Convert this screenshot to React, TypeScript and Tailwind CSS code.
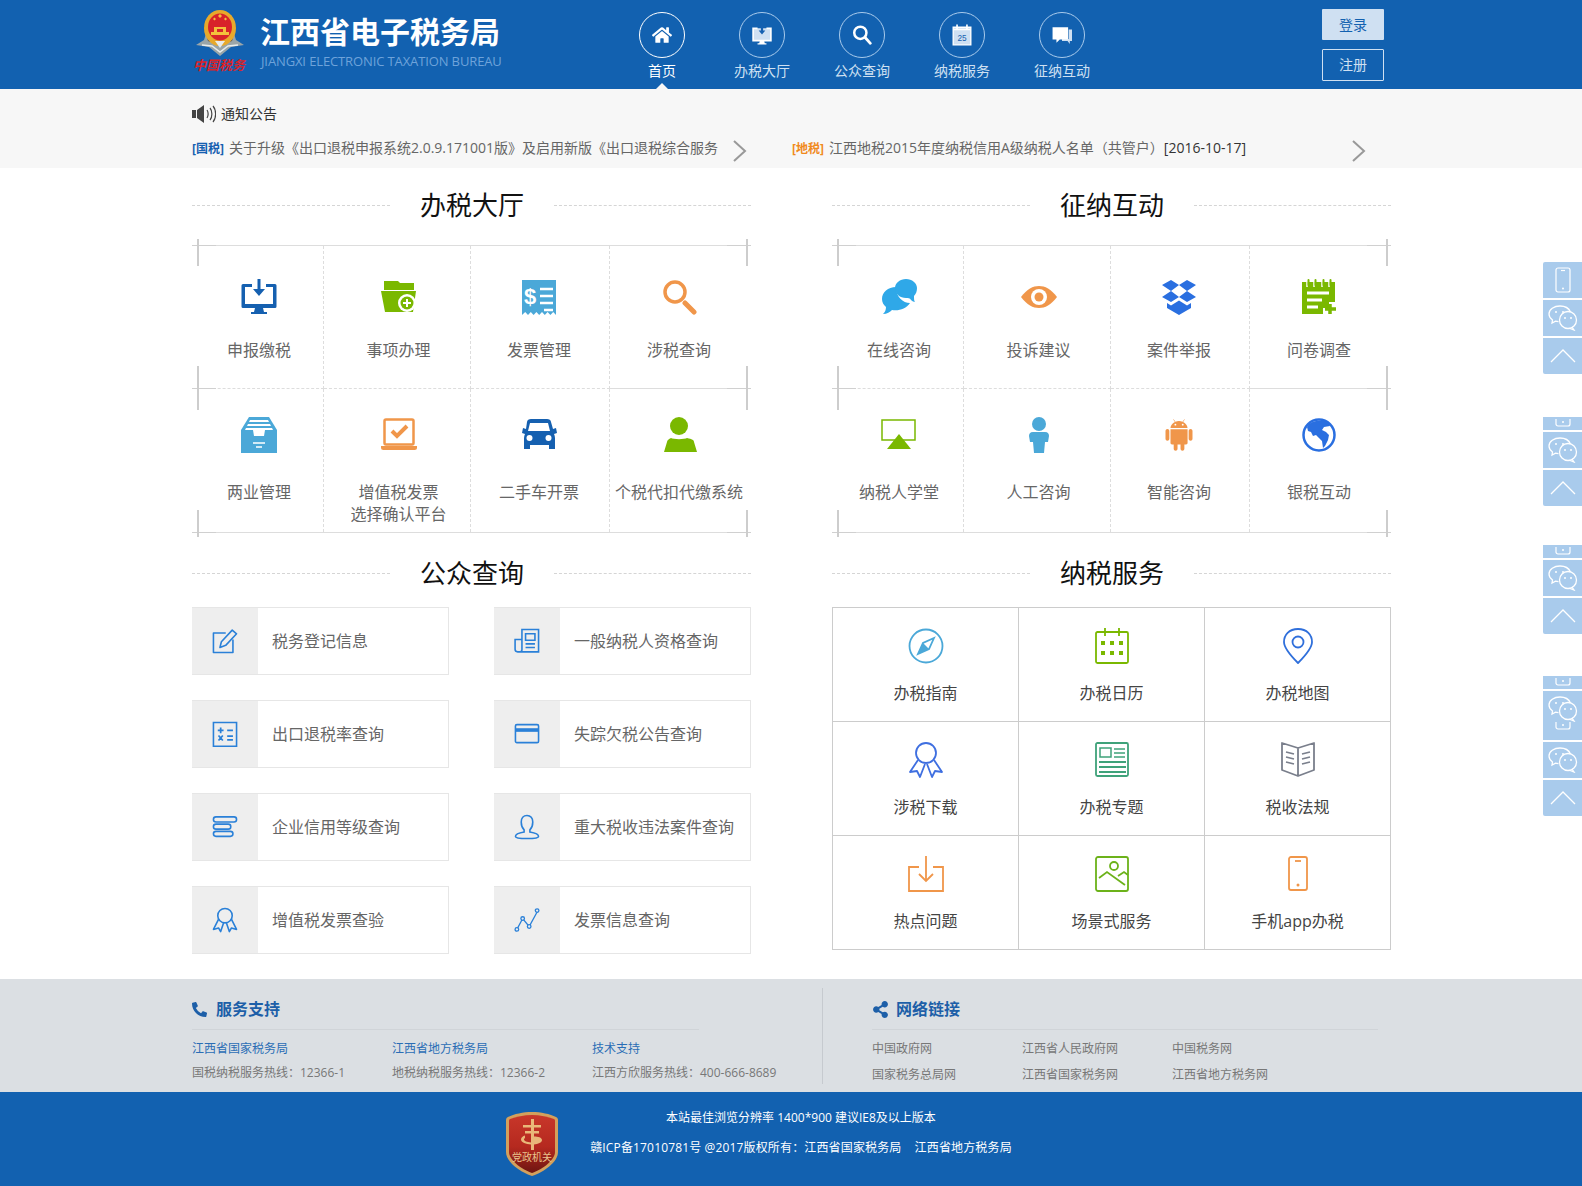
import type { ReactNode } from 'react';
import { AiFillAndroid } from 'react-icons/ai';
import { FaHome, FaPhoneAlt, FaShareAlt } from 'react-icons/fa';

const Ico = ({ children, size = 36 }: { children: ReactNode; size?: number }) => (
  <svg width={size} height={size} viewBox="0 0 36 36" fill="none" className="block shrink-0">
    {children}
  </svg>
);

const BLUE = '#1560b0';
const GREEN = '#7ab800';
const ORANGE = '#f0964a';
const SKY = '#4ba8d8';
const LINE = '#2a80d8';

const hallIcons: Record<string, ReactNode> = {
  monitor: (
    <Ico>
      <path fill={BLUE} d="M2 5h9v3H4v17h28V8h-7V5h9a1.500 1.500 0 0 1 1.500 1.500v21a1.500 1.500 0 0 1-1.500 1.500H2a1.500 1.500 0 0 1-1.500-1.500v-21A1.500 1.500 0 0 1 2 5z" />
      <path fill={BLUE} d="M14 29h8l1 4h3v2H10v-2h3zM16.500 0h3v10h4.500l-6 7-6-7h4.500z" />
    </Ico>
  ),
  folder: (
    <Ico>
      <path fill={GREEN} d="M3 2h14l2 2h14v7H3zM0 12h35l-3 21H4z" />
      <circle cx="26" cy="24" r="9" fill="#fff" />
      <circle cx="26" cy="24" r="6.500" fill={GREEN} />
      <path stroke="#fff" strokeWidth="2" d="M26 20v8M22 24h8" />
    </Ico>
  ),
  invoice: (
    <Ico>
      <path fill={SKY} d="M1 1h34v35l-2.800-3-2.800 3-2.800-3-2.800 3-2.800-3-2.800 3-2.800-3-2.800 3-2.800-3-2.800 3-2.800-3L1 36z" />
      <text x="9" y="25" textAnchor="middle" fill="#fff" fontSize="22" fontWeight="700" fontFamily="Liberation Sans">$</text>
      <path stroke="#fff" strokeWidth="2.500" d="M19 10h13M19 17h13M19 24h13M23 31h9" />
    </Ico>
  ),
  magnifier: (
    <Ico>
      <circle cx="14" cy="13" r="10" stroke={ORANGE} strokeWidth="3.500" />
      <path stroke={ORANGE} strokeWidth="5" strokeLinecap="round" d="M24 24l9 9" />
    </Ico>
  ),
  tray: (
    <Ico>
      <path fill={SKY} d="M8 0h20l8 13v23H0V13z" />
      <path fill="#fff" d="M9 3h18l1 2H8zM7 7h22l1 2H6zM5 11h26l1 2h-8l-1 6H13l-1-6H4z" />
      <path stroke="#fff" strokeWidth="1.500" d="M12 26h12M15 30h6" />
    </Ico>
  ),
  laptop: (
    <Ico>
      <rect x="3.500" y="2.500" width="29" height="25" rx="1.500" stroke={ORANGE} strokeWidth="2.500" />
      <path fill={ORANGE} d="M0 29h36v1.500a2.500 2.500 0 0 1-2.500 2.500h-31A2.500 2.500 0 0 1 0 30.500z" />
      <path stroke={ORANGE} strokeWidth="4" d="M11 14l5 5 10-10" />
    </Ico>
  ),
  car: (
    <Ico>
      <path fill={BLUE} d="M6 5c0-2 2-3 4-3h16c2 0 4 1 4 3l2 7 3-1 1 5-3 1c1 2 1 4 1 6v9h-6v-4H9v4H3v-9c0-2 0-4 1-6l-3-1 1-5 3 1z" />
      <path fill="#fff" d="M9 6h18l2 8H7z" />
      <circle cx="8.500" cy="21" r="3" fill="#fff" />
      <circle cx="27.500" cy="21" r="3" fill="#fff" />
    </Ico>
  ),
  person: (
    <Ico>
      <circle cx="18" cy="9" r="9" fill={GREEN} />
      <path fill={GREEN} d="M10 21c2 1.500 14 1.500 16 0 5 1 7 2 7 4l3 10H3l3-10c0-2 2-3 4-4z" />
    </Ico>
  ),
  chat: (
    <Ico>
      <path fill="#2fa8e8" d="M15 8c-8 0-14 5-14 12 0 3 1.500 6 4 8 0 3-1 5-3 7 4 0 7-2 9-4 7 1 14-1 18-7-7 0-14-6-14-16z" />
      <path fill="#2fa8e8" d="M25 0c-6 0-11 4-11 9 0 6 5 10 11 10 2 0 4 0 5 2 1 1 3 2 4 2-1-1-1-3-1-6 2-2 3-5 3-8 0-5-5-9-11-9z" />
    </Ico>
  ),
  eye: (
    <Ico>
      <path fill={ORANGE} d="M0 18C6 10 12 7 18 7s12 3 18 11c-6 8-12 11-18 11S6 26 0 18z" />
      <circle cx="18" cy="18" r="8" fill="#fff" />
      <circle cx="18" cy="18" r="4.500" fill={ORANGE} />
    </Ico>
  ),
  dropbox: (
    <Ico>
      <path fill="#2a6fe0" d="M10 1l8 5-8 6-9-6zM26 1l9 5-9 6-8-6zM1 18l9-6 8 6-8 5zM35 18l-9-6-8 6 8 5zM6 24l4 2.500 8-5 8 5 4-2.500v5l-12 7-12-7z" />
    </Ico>
  ),
  notepad: (
    <Ico>
      <path fill={GREEN} d="M1 3h33v20h-6v6h-6v6H1z" />
      <path stroke="#fff" strokeWidth="1.500" d="M6 0v8M13 0v8M21 0v8M28 0v8" />
      <path stroke={GREEN} strokeWidth="2" strokeLinecap="round" d="M7.500 1v5M14.500 1v5M22.500 1v5M29.500 1v5" />
      <path stroke="#fff" strokeWidth="3" d="M6 14h22M6 21h15M6 28h11" />
      <path stroke={GREEN} strokeWidth="3.500" d="M29 25v10M24 30h11" />
    </Ico>
  ),
  airplay: (
    <Ico>
      <path stroke={GREEN} strokeWidth="1.500" d="M1 3h33v20H1z" />
      <path fill="#fff" d="M7 24h21v4H7z" />
      <path fill={GREEN} d="M18 17l12 15H6z" />
    </Ico>
  ),
  agent: (
    <Ico>
      <circle cx="18" cy="7" r="7" fill={SKY} />
      <path fill={SKY} d="M12 15h12c3 0 4 2 4 4l-1 6h-3l-1 11H13l-1-11H9l-1-6c0-2 1-4 4-4z" />
    </Ico>
  ),
  android: <AiFillAndroid size={36} color={ORANGE} className="block" />,
  globe: (
    <Ico>
      <circle cx="18" cy="18" r="15.500" stroke="#2a6fe0" strokeWidth="2.500" />
      <path fill="#2a6fe0" d="M8 7c5-4 14-5 20-1l1 3-6 1-2 3 4 2 3 3-1 5-3 6-2 2-1-7-3-3-3-3-3 1-2-4-3-1-1-4z" />
    </Ico>
  ),
};

const lineIcons: Record<string, ReactNode> = {
  edit: (
    <Ico size={26}>
      <g stroke={LINE} strokeWidth="2.200" strokeLinejoin="round">
        <path d="M19 7H2v27h27V16" />
        <path d="M11 27l2-8L28 3l6 5-15 16z" />
      </g>
    </Ico>
  ),
  news: (
    <Ico size={26}>
      <g stroke={LINE} strokeWidth="2.200">
        <path d="M11 2h23v31H5a3.500 3.500 0 0 1-3.500-3.500V16H11zM11 16v14a3 3 0 0 1-3 3" />
        <path d="M16 8h13v9H16zM16 22h13M16 27h13" />
      </g>
    </Ico>
  ),
  calc: (
    <Ico size={26}>
      <path stroke={LINE} strokeWidth="2.200" d="M2 2h32v33H2z" />
      <path stroke={LINE} strokeWidth="2.400" d="M8 13h8M12 9v8M21 13h8M9 20l6 7M15 20l-6 7M21 21h8M21 26h8" />
    </Ico>
  ),
  card: (
    <Ico size={26}>
      <rect x="2" y="5" width="32" height="25" rx="2" stroke={LINE} strokeWidth="2.200" />
      <path fill={LINE} d="M2 10h32v5H2z" />
    </Ico>
  ),
  bars: (
    <Ico size={26}>
      <g stroke={LINE} strokeWidth="2.200">
        <rect x="2" y="4" width="32" height="7" rx="3.500" />
        <rect x="2" y="14" width="24" height="7" rx="3.500" />
        <rect x="2" y="24" width="27" height="7" rx="3.500" />
      </g>
    </Ico>
  ),
  user: (
    <Ico size={26}>
      <g stroke={LINE} strokeWidth="2.200">
        <path d="M18 2c-5 0-8 4-8 9 0 5 2 9 4 11v3c-6 1-12 3-12 6 0 2 3 3 16 3s16-1 16-3c0-3-6-5-12-6v-3c2-2 4-6 4-11 0-5-3-9-8-9z" />
      </g>
    </Ico>
  ),
  ribbon: (
    <Ico size={26}>
      <g stroke={LINE} strokeWidth="2.200" strokeLinejoin="round">
        <circle cx="18" cy="12" r="10" />
        <path d="M9 17L2 31l7-2 3 5 4-12M27 17l7 14-7-2-3 5-4-12" />
      </g>
    </Ico>
  ),
  trend: (
    <Ico size={26}>
      <g stroke={LINE} strokeWidth="1.800">
        <path d="M4 31l8-15 9 11 11-20" />
        <circle cx="4" cy="31" r="2.500" fill="#eee" />
        <circle cx="12" cy="16" r="2.500" fill="#eee" />
        <circle cx="21" cy="27" r="2.500" fill="#eee" />
        <circle cx="32" cy="5" r="2.500" fill="#eee" />
      </g>
    </Ico>
  ),
};

const serviceIcons: Record<string, ReactNode> = {
  compass: (
    <Ico>
      <circle cx="18" cy="18" r="16.500" stroke={SKY} strokeWidth="1.800" />
      <path stroke={SKY} strokeWidth="1.800" d="M26 10l-5 11-11 5 5-11z" />
      <path fill={SKY} d="M10 26l5-11 6 6z" />
    </Ico>
  ),
  calendar: (
    <Ico>
      <rect x="2" y="4" width="32" height="31" rx="1.500" stroke={GREEN} strokeWidth="1.800" />
      <path stroke={GREEN} strokeWidth="1.800" d="M11 0v8M25 0v8" />
      <path fill={GREEN} d="M7 13h4v4H7zM16 13h4v4h-4zM25 13h4v4h-4zM7 23h4v4H7zM16 23h4v4h-4zM25 23h4v4h-4z" />
    </Ico>
  ),
  pin: (
    <Ico>
      <path stroke="#2f6fdb" strokeWidth="1.800" d="M18 1C9 1 4 7 4 14c0 7 9 16 14 21 5-5 14-14 14-21 0-7-5-13-14-13z" />
      <circle cx="18" cy="14" r="5.500" stroke="#2f6fdb" strokeWidth="1.800" />
    </Ico>
  ),
  award: (
    <Ico>
      <g stroke="#3f6fe0" strokeWidth="1.800" strokeLinejoin="round">
        <circle cx="18" cy="11" r="10" />
        <path d="M10 18L2 30l7-1 3 6 5-13M26 18l8 12-7-1-3 6-5-13" />
      </g>
    </Ico>
  ),
  paper: (
    <Ico>
      <rect x="2" y="1" width="32" height="33" rx="1.500" stroke="#3fa27a" strokeWidth="1.800" />
      <path stroke="#3fa27a" strokeWidth="1.500" d="M6 6h11v9H6zM20 7h11M20 11h11M20 15h11" />
      <path stroke="#3fa27a" strokeWidth="2" d="M5 20h27M5 25h27M5 30h27" />
    </Ico>
  ),
  book: (
    <Ico>
      <path stroke="#7a7f8c" strokeWidth="1.800" strokeLinejoin="round" d="M2 1l16 5 16-5v27l-16 6-16-6zM18 6v28" />
      <path stroke="#7a7f8c" strokeWidth="1.800" d="M6 10l8 2M6 15l8 2M6 20l8 2M30 10l-8 2M30 15l-8 2M30 20l-8 2" />
    </Ico>
  ),
  inbox: (
    <Ico>
      <path stroke={ORANGE} strokeWidth="1.800" d="M11 11H1v24h34V11H25" />
      <path stroke={ORANGE} strokeWidth="1.800" d="M18 0v25M11 18l7 7 7-7" />
    </Ico>
  ),
  image: (
    <Ico>
      <rect x="2" y="1" width="32" height="34" rx="2" stroke="#6cb21a" strokeWidth="1.800" />
      <circle cx="20" cy="10" r="4" stroke="#6cb21a" strokeWidth="1.800" />
      <path stroke="#6cb21a" strokeWidth="1.800" d="M5 22l8-6 18 13M24 20l6-4 4 3" />
    </Ico>
  ),
  mobile: (
    <Ico>
      <rect x="9" y="1" width="18" height="33" rx="2" stroke={ORANGE} strokeWidth="1.800" />
      <path stroke={ORANGE} strokeWidth="1.800" d="M15 5h6" />
      <circle cx="18" cy="29" r="1.500" fill={ORANGE} />
    </Ico>
  ),
};

const navIcons: Record<string, ReactNode> = {
  home: <FaHome size={20} color="#fff" className="block" />,
  monitor: (
    <svg width="20" height="20" viewBox="0 0 36 36" fill="none">
      <path stroke="#fff" strokeWidth="3" fill="#cfe0f2" d="M10 6H2v22h32V6h-8" />
      <path fill="#fff" d="M14 29h8l1 4h3v2H10v-2h3z" />
      <path fill={BLUE} d="M16 0h4v10h4l-6 7-6-7h4z" />
    </svg>
  ),
  search: (
    <svg width="20" height="20" viewBox="0 0 36 36" fill="none">
      <circle cx="15" cy="14" r="11" stroke="#fff" strokeWidth="4.500" />
      <path stroke="#fff" strokeWidth="5" strokeLinecap="round" d="M24 23l9 10" />
    </svg>
  ),
  calendar: (
    <svg width="20" height="22" viewBox="0 0 36 40" fill="none">
      <path stroke="#fff" strokeWidth="2.500" fill="#cfe0f2" d="M2 6h32v32H2z" />
      <path stroke="#fff" strokeWidth="3" d="M2 10h32M9 1v8M27 1v8" />
      <text x="18" y="31" textAnchor="middle" fontSize="15" fill={BLUE} fontFamily="Liberation Sans">25</text>
    </svg>
  ),
  chat: (
    <svg width="20" height="20" viewBox="0 0 36 36" fill="none">
      <path fill="#cfe0f2" d="M30 8h6v21h-4v5l-4-5H18v-4h12z" />
      <path fill="#fff" d="M1 4h28v22H14l-6 6v-6H1z" />
    </svg>
  ),
};

const navItems = [
  { key: 'home', label: '首页', active: true },
  { key: 'monitor', label: '办税大厅' },
  { key: 'search', label: '公众查询' },
  { key: 'calendar', label: '纳税服务' },
  { key: 'chat', label: '征纳互动' },
];

const hallLeft = [
  { icon: 'monitor', label: '申报缴税' },
  { icon: 'folder', label: '事项办理' },
  { icon: 'invoice', label: '发票管理' },
  { icon: 'magnifier', label: '涉税查询' },
  { icon: 'tray', label: '两业管理' },
  { icon: 'laptop', label: '增值税发票\n选择确认平台' },
  { icon: 'car', label: '二手车开票' },
  { icon: 'person', label: '个税代扣代缴系统' },
];

const hallRight = [
  { icon: 'chat', label: '在线咨询' },
  { icon: 'eye', label: '投诉建议' },
  { icon: 'dropbox', label: '案件举报' },
  { icon: 'notepad', label: '问卷调查' },
  { icon: 'airplay', label: '纳税人学堂' },
  { icon: 'agent', label: '人工咨询' },
  { icon: 'android', label: '智能咨询' },
  { icon: 'globe', label: '银税互动' },
];

const queries = [
  { icon: 'edit', label: '税务登记信息' },
  { icon: 'news', label: '一般纳税人资格查询' },
  { icon: 'calc', label: '出口退税率查询' },
  { icon: 'card', label: '失踪欠税公告查询' },
  { icon: 'bars', label: '企业信用等级查询' },
  { icon: 'user', label: '重大税收违法案件查询' },
  { icon: 'ribbon', label: '增值税发票查验' },
  { icon: 'trend', label: '发票信息查询' },
];

const services = [
  { icon: 'compass', label: '办税指南' },
  { icon: 'calendar', label: '办税日历' },
  { icon: 'pin', label: '办税地图' },
  { icon: 'award', label: '涉税下载' },
  { icon: 'paper', label: '办税专题' },
  { icon: 'book', label: '税收法规' },
  { icon: 'inbox', label: '热点问题' },
  { icon: 'image', label: '场景式服务' },
  { icon: 'mobile', label: '手机app办税' },
];

const support = [
  { title: '江西省国家税务局', text: '国税纳税服务热线：12366-1' },
  { title: '江西省地方税务局', text: '地税纳税服务热线：12366-2' },
  { title: '技术支持', text: '江西方欣服务热线：400-666-8689' },
];

const links = ['中国政府网', '江西省人民政府网', '中国税务网', '国家税务总局网', '江西省国家税务网', '江西省地方税务网'];

// labels in the hall grid sit a little off the cell centre
const hallColPad = ['pr-[3px]', 'pl-[3px]', 'pr-[2px]', ''];

function Emblem() {
  return (
    <svg width="54" height="50" viewBox="0 0 54 50" fill="none" className="block">
      <path fill="#9aa5a8" d="M3 36l8-5 5-16 3 15 8 5 8-5 3-15 5 16 8 5-13 2-11 9-11-9z" />
      <path stroke="#e8ecec" strokeWidth="1.500" d="M9 36l10 1 8 6 8-6 10-1" />
      <path fill="#27345c" d="M11 17l4 15 6 2-5-19zM43 17l-4 15-6 2 5-19z" />
      <ellipse cx="27" cy="19" rx="16" ry="18" fill="#e8a92b" />
      <ellipse cx="27" cy="18" rx="12" ry="13.500" fill="#d8232a" />
      <path fill="#f3c13c" d="M18 23h18v3H18zM21 18h12v5H21zM25 7l2-2 2 2-2 2zM20 10l1.500-1.500L23 10l-1.500 1.500zM31 10l1.500-1.500L34 10l-1.500 1.500z" />
      <path fill="#d8232a" d="M24 20h6v3h-6z" />
      <path fill="#e8ecec" d="M22 32h10l-5 7z" />
    </svg>
  );
}

function Shield() {
  return (
    <svg width="52" height="64" viewBox="0 0 52 64" fill="none" className="block">
      <defs>
        <linearGradient id="shield-fill" x1="0" y1="0" x2="0" y2="1">
          <stop offset="0" stopColor="#c8372a" />
          <stop offset="0.55" stopColor="#b5291f" />
          <stop offset="1" stopColor="#6d1511" />
        </linearGradient>
      </defs>
      <path fill="#d3a05c" d="M26 0c9 0 18 2 24 5 2 1 2 2 2 4v31c0 10-14 20-26 24C14 60 0 50 0 40V9c0-2 0-3 2-4 6-3 15-5 24-5z" />
      <path fill="url(#shield-fill)" d="M26 3c8 0 16 2 22 4 1 .5 1 1 1 3v30c0 8-12 17-23 21C15 57 3 48 3 40V10c0-2 0-2.500 1-3 6-2 14-4 22-4z" />
      <path fill="#e9b879" d="M25 7h3v6h7v2.500h-7V19h5v2.500h-5v3c4 0 8 1 8 3.500s-4 4-8 4.500V38h-3v-5.500c-5-.5-10-2-10-5 0-2 2-3.500 4-4v2.500c-1 .5-1 1-1 1.500 0 1.500 3 2.500 7 3V21.500h-6V19h6v-3.500h-8V13h8z" />
      <text x="26" y="49" textAnchor="middle" fontSize="10" fill="#eac48d" fontFamily="Noto Sans CJK SC">党政机关</text>
    </svg>
  );
}

function SectionTitle({ title }: { title: string }) {
  return (
    <div className="flex h-10 items-center">
      <div className="w-[198px] border-t border-dashed border-[#d5d5d5]" />
      <h2 className="flex-1 text-center text-[26px] leading-10 font-normal text-[#111]">{title}</h2>
      <div className="w-[197px] border-t border-dashed border-[#d5d5d5]" />
    </div>
  );
}

function TickH({ className }: { className: string }) {
  return <span className={`absolute h-px w-[24px] bg-[#d0d0d0] ${className}`} />;
}

function TickV({ className }: { className: string }) {
  return <span className={`absolute w-[2px] bg-[#cdcdcd] ${className}`} />;
}

function Hall({ items }: { items: { icon: string; label: string }[] }) {
  return (
    <div className="relative mt-[20px] h-[287px] px-[6px]">
      <div className="grid grid-cols-[126px_147px_139px_138px] border-y border-[#dddddd]">
        {items.map((item, i) => (
          <div
            key={item.label}
            className={`flex h-[143px] flex-col items-center ${hallColPad[i % 4]} ${i < 4 ? 'border-b border-[#dddddd] pt-[33px]' : 'pt-[28px]'} ${
              i % 4 === 3 ? '' : 'border-r border-dashed border-[#dddddd]'
            }`}
          >
            <div className="flex h-[36px] w-[36px] items-center justify-center">{hallIcons[item.icon]}</div>
            <div
              className={`whitespace-pre-line text-center text-base leading-[22px] text-[#666] ${
                i < 4 ? 'mt-[24px]' : 'mt-[28px]'
              }`}
            >
              {item.label}
            </div>
          </div>
        ))}
      </div>
      <TickH className="left-0 top-0" />
      <TickH className="right-0 top-0" />
      <TickH className="left-0 top-[143px]" />
      <TickH className="right-0 top-[143px]" />
      <TickH className="left-0 top-[287px]" />
      <TickH className="right-0 top-[287px]" />
      <TickV className="left-[5px] top-[-6px] h-[27px]" />
      <TickV className="right-[3px] top-[-6px] h-[27px]" />
      <TickV className="left-[5px] top-[121px] h-[44px]" />
      <TickV className="right-[3px] top-[121px] h-[44px]" />
      <TickV className="left-[5px] top-[265px] h-[27px]" />
      <TickV className="right-[3px] top-[265px] h-[27px]" />
    </div>
  );
}

function WeChat() {
  return (
    <svg width="30" height="26" viewBox="0 0 30 26" fill="none" stroke="#fff" strokeWidth="1.300">
      <path d="M12 1C6 1 1 4.500 1 9c0 2.500 1.500 4.500 3.500 6L4 18l3.500-1.800c1 .3 2 .4 3 .4" />
      <path d="M12 1c5 0 9 2.500 10.500 6" />
      <circle cx="20" cy="15" r="8.500" />
      <path d="M24 22l2 3-4-1.500" />
      <circle cx="8" cy="7" r="1" fill="#fff" stroke="none" />
      <circle cx="15" cy="7" r="1" fill="#fff" stroke="none" />
      <circle cx="17" cy="13" r="1" fill="#fff" stroke="none" />
      <circle cx="23" cy="13" r="1" fill="#fff" stroke="none" />
    </svg>
  );
}

function RailPhone() {
  return (
    <svg width="16" height="26" viewBox="0 0 16 26" fill="none" stroke="#fff" strokeWidth="1.200">
      <rect x="1" y="1" width="14" height="24" rx="2" />
      <path d="M6 3.500h4" />
      <circle cx="8" cy="21.500" r="1" fill="#fff" stroke="none" />
    </svg>
  );
}

function RailUp() {
  return (
    <svg width="26" height="16" viewBox="0 0 26 16" fill="none" stroke="#fff" strokeWidth="1.300">
      <path d="M1 14L13 2l12 12" />
    </svg>
  );
}

function RailSliver() {
  return (
    <svg width="16" height="8" viewBox="0 0 16 8" fill="none" stroke="#fff" strokeWidth="1.200" className="block">
      <path d="M1 0v5a2 2 0 0 0 2 2h10a2 2 0 0 0 2-2V0" />
      <circle cx="8" cy="3" r="1" fill="#fff" stroke="none" />
    </svg>
  );
}

const railCell = 'flex w-[39px] items-center justify-center bg-[#a9cbec]';

function SliverCell() {
  return <div className={`${railCell} h-[13px] items-start pt-[2px]`}><RailSliver /></div>;
}

function WeChatCell() {
  return <div className={`${railCell} h-[36px]`}><WeChat /></div>;
}

function UpCell() {
  return <div className={`${railCell} h-[36px] rounded-bl-[2px]`}><RailUp /></div>;
}

function SideRail() {
  return (
    <>
      <div className="absolute right-0 top-[262px] flex flex-col gap-[2px]">
        <div className={`${railCell} h-[36px] rounded-tl-[2px]`}><RailPhone /></div>
        <WeChatCell />
        <UpCell />
      </div>
      <div className="absolute right-0 top-[417px] flex flex-col gap-[2px]">
        <SliverCell />
        <WeChatCell />
        <UpCell />
      </div>
      <div className="absolute right-0 top-[545px] flex flex-col gap-[2px]">
        <SliverCell />
        <WeChatCell />
        <UpCell />
      </div>
      <div className="absolute right-0 top-[676px] flex flex-col gap-[2px]">
        <SliverCell />
        <div className={`${railCell} h-[49px] flex-col justify-start pt-[5px]`}>
          <WeChat />
          <RailSliver />
        </div>
        <WeChatCell />
        <UpCell />
      </div>
    </>
  );
}

export default function App() {
  return (
    <div className="relative h-[1186px] overflow-hidden bg-white font-['Open_Sans','Noto_Sans_CJK_SC',sans-serif]">
      <header className="h-[89px] bg-[#1261b0]">
        <div className="relative mx-auto flex h-full w-[1200px]">
          <div className="ml-[2px] w-[56px] pt-[9px]">
            <Emblem />
            <div className="-mt-px whitespace-nowrap text-[13px] leading-[14px] font-bold italic text-[#d9232a]">中国税务</div>
          </div>
          <div className="ml-[11px] w-[352px] pt-[11px]">
            <div className="text-[30px] leading-[42px] font-bold text-white">江西省电子税务局</div>
            <div className="ml-px whitespace-nowrap text-[13px] leading-4 tracking-[-0.12px] text-[#6ea3da]">JIANGXI ELECTRONIC TAXATION BUREAU</div>
          </div>
          <nav className="flex">
            {navItems.map((item) => (
              <div key={item.key} className="relative flex w-[100px] flex-col items-center pt-[12px]">
                <div className={`flex h-[46px] w-[46px] items-center justify-center rounded-full border ${item.active ? 'border-white' : 'border-[#a9cbec]'}`}>
                  {navIcons[item.key]}
                </div>
                <div className={`mt-[3px] text-sm leading-5 ${item.active ? 'text-white' : 'text-[#cfe0f2]'}`}>{item.label}</div>
                {item.active && (
                  <span className="absolute bottom-0 left-1/2 h-0 w-0 -translate-x-1/2 border-x-[6px] border-b-[6px] border-x-transparent border-b-[#f7f7f7]" />
                )}
              </div>
            ))}
          </nav>
          <div className="ml-auto mr-[7px] flex w-[62px] flex-col gap-[9px] pt-[9px]">
            <div className="flex h-[31px] items-center justify-center rounded-[1px] bg-[#cfe0f2] text-sm text-[#1261b0]">登录</div>
            <div className="flex h-[32px] items-center justify-center rounded-[1px] border border-[#cfe0f2] text-sm text-[#cfe0f2]">注册</div>
          </div>
        </div>
      </header>

      <section className="h-[79px] bg-[#f7f7f7]">
        <div className="mx-auto w-[1200px] pl-px">
          <div className="flex h-[50px] items-center gap-[5px] text-sm text-[#333]">
            <svg width="24" height="20" viewBox="0 0 24 20" fill="none">
              <path fill="#444" d="M0 6h4v8H0zM5 6l7-5v18l-7-5z" />
              <path stroke="#444" strokeWidth="1.200" d="M15 6c1.500 2 1.500 6 0 8M18 4c2.500 3 2.500 9 0 12M21 2c3.500 4 3.500 12 0 16" />
            </svg>
            <span>通知公告</span>
          </div>
          <div className="-mt-[6px] grid grid-cols-[600px_600px] text-sm text-[#666]">
            <div className="flex items-center">
              <div className="w-[541px] truncate leading-5">
                <b className="mr-[5px] text-xs text-[#1560b0]">[国税]</b>
                关于升级《出口退税申报系统2.0.9.171001版》及启用新版《出口退税综合服务
              </div>
              <svg width="14" height="24" viewBox="0 0 14 24" fill="none" className="mt-[6px]">
                <path stroke="#999" strokeWidth="2" d="M1 2l11 10L1 22" />
              </svg>
            </div>
            <div className="flex items-center">
              <div className="w-[560px] truncate leading-5">
                <b className="mr-[5px] text-xs text-[#f08a1d]">[地税]</b>
                江西地税2015年度纳税信用A级纳税人名单（共管户）<span className="text-[#333]">[2016-10-17]</span>
              </div>
              <svg width="14" height="24" viewBox="0 0 14 24" fill="none" className="mt-[6px]">
                <path stroke="#999" strokeWidth="2" d="M1 2l11 10L1 22" />
              </svg>
            </div>
          </div>
        </div>
      </section>

      <main className="h-[811px]">
        <div className="mx-auto grid w-[1200px] grid-cols-[559px_559px] gap-x-[81px] pl-px pt-[17px]">
          <div>
            <SectionTitle title="办税大厅" />
            <Hall items={hallLeft} />
          </div>
          <div>
            <SectionTitle title="征纳互动" />
            <Hall items={hallRight} />
          </div>
          <div className="mt-[21px]">
            <SectionTitle title="公众查询" />
            <div className="mt-[14px] grid grid-cols-[257px_257px] gap-x-[45px] gap-y-[25px]">
              {queries.map((item) => (
                <div key={item.label} className="flex h-[68px] border border-l-0 border-[#e6e6e6]">
                  <div className="flex w-[66px] items-center justify-center bg-[#eeeeee]">{lineIcons[item.icon]}</div>
                  <div className="ml-[14px] self-center whitespace-nowrap text-base text-[#666]">{item.label}</div>
                </div>
              ))}
            </div>
          </div>
          <div className="mt-[21px]">
            <SectionTitle title="纳税服务" />
            <div className="mt-[14px] grid grid-cols-3 border-l border-t border-[#cccccc]">
              {services.map((item) => (
                <div key={item.label} className="flex h-[114px] flex-col items-center border-b border-r border-[#cccccc] pt-[20px]">
                  {serviceIcons[item.icon]}
                  <div className="mt-[18px] text-base leading-[22px] text-[#444]">{item.label}</div>
                </div>
              ))}
            </div>
          </div>
        </div>
      </main>

      <section className="h-[113px] bg-[#dbdfe3]">
        <div className="mx-auto flex h-full w-[1200px] pl-px">
          <div className="w-[630px] pt-[18px]">
            <div className="flex h-[24px] w-[507px] items-center gap-[9px] text-[#1d5fa8]">
              <FaPhoneAlt size={15} />
              <span className="text-base font-bold">服务支持</span>
            </div>
            <div className="mt-[8px] w-[507px] border-t border-[#d0d4d8]" />
            <div className="mt-[9px] grid w-[600px] grid-cols-[200px_200px_200px] text-xs">
              {support.map((item) => (
                <div key={item.title} className="whitespace-nowrap">
                  <div className="leading-[20px] text-[#2a6db5]">{item.title}</div>
                  <div className="mt-[4px] leading-[20px] text-[#777]">{item.text}</div>
                </div>
              ))}
            </div>
          </div>
          <div className="mt-[9px] h-[96px] w-px bg-[#c6cacf]" />
          <div className="ml-[49px] w-[506px] pt-[18px]">
            <div className="flex h-[24px] items-center gap-[7px] text-[#1d5fa8]">
              <FaShareAlt size={17} />
              <span className="text-base font-bold">网络链接</span>
            </div>
            <div className="mt-[8px] border-t border-[#d0d4d8]" />
            <div className="mt-[9px] grid grid-cols-[150px_150px_150px] gap-y-[6px] text-xs leading-[20px] text-[#777]">
              {links.map((l) => (
                <div key={l}>{l}</div>
              ))}
            </div>
          </div>
        </div>
      </section>

      <footer className="h-[94px] bg-[#1261b0]">
        <div className="mx-auto flex w-[1200px] pl-[315px]">
          <div className="pt-[20px]">
            <Shield />
          </div>
          <div className="ml-[31px] w-[424px] pt-[11px] text-center text-xs leading-[30px] text-white">
            <div>本站最佳浏览分辨率 1400*900 建议IE8及以上版本</div>
            <div className="whitespace-nowrap tracking-[0.15px]">赣ICP备17010781号 @2017版权所有：江西省国家税务局&nbsp;&nbsp;&nbsp;&nbsp;江西省地方税务局</div>
          </div>
        </div>
      </footer>

      <SideRail />
    </div>
  );
}
